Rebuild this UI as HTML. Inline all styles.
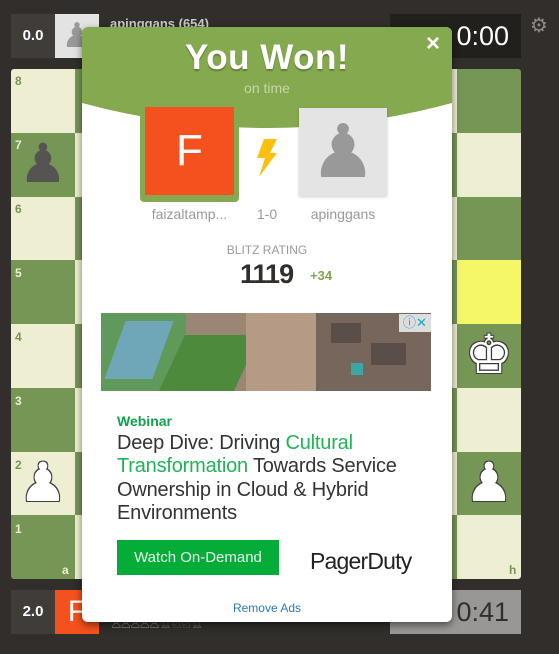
<!DOCTYPE html>
<html><head><style>
*{margin:0;padding:0;box-sizing:border-box}
body{width:559px;height:654px;background:#312e2b;position:relative;overflow:hidden;font-family:"Liberation Sans",sans-serif}
.sq{position:absolute;width:64px;height:64px}
.l{background:#eeeed2}.d{background:#769656}
.lab{position:absolute;font-size:12px;font-weight:bold}
.pc{position:absolute;font-family:"DejaVu Sans",sans-serif;font-size:54px;line-height:64px;width:64px;text-align:center}
.w{color:#fff;text-shadow:0 0 1px #333,0 0 1px #333,1px 1px 0 #444,-1px -1px 0 #444,1px -1px 0 #444,-1px 1px 0 #444}
.abs{position:absolute}
</style></head><body>
<div class="abs" style="left:11px;top:69px;width:510px;height:510px;border-radius:3px;overflow:hidden" id="b"></div>
<script>
var b=document.getElementById('b'),h='';
for(var r=0;r<8;r++)for(var c=0;c<8;c++){var light=(r+c)%2==0;h+='<div class="sq '+(light?'l':'d')+'" style="left:'+(c*63.75)+'px;top:'+(r*63.75)+'px;'+(r==3&&c==7?'background:#f6f669':'')+'"></div>';}
b.innerHTML=h;
</script>
<div class="lab" style="left:15px;top:74px;color:#769656">8</div>
<div class="lab" style="left:15px;top:138px;color:#eeeed2">7</div>
<div class="lab" style="left:15px;top:202px;color:#769656">6</div>
<div class="lab" style="left:15px;top:266px;color:#eeeed2">5</div>
<div class="lab" style="left:15px;top:330px;color:#769656">4</div>
<div class="lab" style="left:15px;top:394px;color:#eeeed2">3</div>
<div class="lab" style="left:15px;top:458px;color:#769656">2</div>
<div class="lab" style="left:15px;top:522px;color:#eeeed2">1</div>
<div class="lab" style="left:62px;top:563px;color:#eeeed2">a</div>
<div class="lab" style="left:509px;top:563px;color:#769656">h</div>
<div class="pc" style="left:11px;top:132px;color:#565452">♟</div>
<div class="pc w" style="left:11px;top:451px">♟</div>
<div class="pc w" style="left:457px;top:323px">♚</div>
<div class="pc w" style="left:457px;top:451px">♟</div>
<!-- top bar -->
<div class="abs" style="left:11px;top:14px;width:44px;height:44px;background:#403d39;color:#fff;font-weight:bold;font-size:15px;line-height:44px;text-align:center">0.0</div>
<div class="abs" style="left:55px;top:14px;width:44px;height:44px;background:#e3e3e3;color:#999;font-size:34px;line-height:44px;text-align:center;font-family:'DejaVu Sans'">♟</div>
<div class="abs" style="left:110px;top:16px;color:#c9c8c5;font-weight:bold;font-size:13px">apinggans (654)</div>
<div class="abs" style="left:390px;top:14px;width:131px;height:44px;background:#21201d;color:#fff;font-size:27px;line-height:44px;text-align:right;padding-right:12px">0:00</div>
<div class="abs" style="left:530px;top:13px;color:#8b8987;font-size:20px;font-family:'DejaVu Sans'">⚙</div>
<!-- bottom bar -->
<div class="abs" style="left:11px;top:590px;width:44px;height:44px;background:#403d39;color:#fff;font-weight:bold;font-size:15px;line-height:44px;text-align:center">2.0</div>
<div class="abs" style="left:55px;top:590px;width:44px;height:44px;background:#f4511e;color:#fff;font-size:30px;line-height:44px;text-align:center">F</div>
<div class="abs" style="left:110px;top:616px;color:#7c7a77;font-size:14px;font-family:'DejaVu Sans';letter-spacing:-3px">♙♙♙♙♙ ♖ ♘♘ ♖</div>
<div class="abs" style="left:390px;top:590px;width:131px;height:44px;background:#989795;color:#312e2b;font-size:27px;line-height:44px;text-align:right;padding-right:12px">0:41</div>
<!-- popup -->
<div class="abs" style="left:82px;top:27px;width:370px;height:595px;background:#fff;border-radius:6px;overflow:hidden;box-shadow:0 3px 8px rgba(0,0,0,.5)">
<svg class="abs" style="left:0;top:0" width="370" height="110"><path d="M0,0H370V76Q185,126 0,76Z" fill="#85a94e"/></svg>
<div class="abs" style="left:0;top:11px;width:370px;text-align:center;color:#fff;font-weight:bold;font-size:35px;letter-spacing:0.5px;text-shadow:0 2px 1px rgba(0,0,0,.25)">You Won!</div>
<div class="abs" style="left:0;top:53px;width:370px;text-align:center;color:#c3d8a6;font-size:14px">on time</div>
<div class="abs" style="left:344px;top:3px;color:#fff;font-size:24px;font-weight:bold">×</div>
<div class="abs" style="left:58px;top:78px;width:99px;height:97px;background:#85a94e;border-radius:4px"></div>
<div class="abs" style="left:63px;top:80px;width:89px;height:88px;background:#f4511e;color:#fff;font-size:44px;line-height:88px;text-align:center">F</div>
<svg class="abs" style="left:173px;top:112px" width="24" height="38"><path d="M9,0H22L15,14H22L4,38L10,19H2Z" fill="#fbc00d"/></svg>
<div class="abs" style="left:217px;top:81px;width:88px;height:88px;background:#e4e4e4;box-shadow:0 1px 3px rgba(0,0,0,.2);color:#999;font-size:74px;line-height:88px;text-align:center;font-family:'DejaVu Sans'">♟</div>
<div class="abs" style="left:55px;top:179px;width:105px;text-align:center;color:#999;font-size:14px">faizaltamp...</div>
<div class="abs" style="left:160px;top:179px;width:50px;text-align:center;color:#999;font-size:14px">1-0</div>
<div class="abs" style="left:212px;top:179px;width:98px;text-align:center;color:#999;font-size:14px">apinggans</div>
<div class="abs" style="left:0;top:216px;width:370px;text-align:center;color:#999;font-size:12px">BLITZ RATING</div>
<div class="abs" style="left:158px;top:232px;color:#312e2b;font-size:27px;font-weight:bold;letter-spacing:-1px">1119</div>
<div class="abs" style="left:228px;top:241px;color:#7fa650;font-size:13px;font-weight:bold">+34</div>
<div class="abs" style="left:35px;top:386px;color:#0fa24a;font-size:14px;font-weight:bold">Webinar</div>
<div class="abs" style="left:35px;top:405px;width:320px;color:#333;font-size:20px;line-height:23.3px;letter-spacing:-0.2px">Deep Dive: Driving <span style="color:#21b357">Cultural Transformation</span> Towards Service Ownership in Cloud &amp; Hybrid Environments</div>
<div class="abs" style="left:35px;top:513px;width:162px;height:35px;background:#06ac38;color:#e8f5ec;font-size:15px;line-height:35px;text-align:center">Watch On-Demand</div>
<div class="abs" style="left:228px;top:521px;color:#222;font-size:23px;letter-spacing:-0.8px">PagerDuty</div>
<div class="abs" style="left:0;top:574px;width:370px;text-align:center;color:#2a79b6;font-size:12px">Remove Ads</div>
</div>
<!-- ad image -->
<div class="abs" style="left:101px;top:313px;width:330px;height:78px;overflow:hidden;background:#9a8674">
<div class="abs" style="left:0;top:0;width:85px;height:78px;background:#5f9a5a"></div>
<div class="abs" style="left:14px;top:8px;width:48px;height:58px;background:#6fa6b8;transform:skewX(-20deg)"></div>
<div class="abs" style="left:70px;top:22px;width:75px;height:60px;background:#4e8a3c;transform:skewX(-25deg)"></div>
<div class="abs" style="left:145px;top:0;width:70px;height:78px;background:#b59b85"></div>
<div class="abs" style="left:215px;top:0;width:115px;height:78px;background:#76665c"></div>
<div class="abs" style="left:230px;top:10px;width:30px;height:20px;background:#5a4e48"></div>
<div class="abs" style="left:270px;top:30px;width:35px;height:22px;background:#5a4e48"></div>
<div class="abs" style="left:250px;top:50px;width:12px;height:12px;background:#3aa6a6"></div>
<div class="abs" style="left:298px;top:1px;width:32px;height:18px;background:#ddd;color:#17a5cc;font-size:13px;line-height:18px;text-align:center">ⓘ✕</div>
</div>
</body></html>
